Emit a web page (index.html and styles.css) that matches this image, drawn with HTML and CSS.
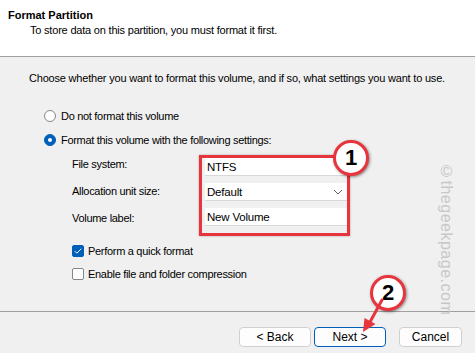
FILE: index.html
```html
<!DOCTYPE html>
<html lang="en">
<head>
    <meta charset="UTF-8">
    <title>Format Partition</title>
    <link rel="stylesheet" href="styles.css">
</head>
<body>
    <div id="wizard">
        <div class="header">
            <h1 class="title">Format Partition</h1>
            <p class="subtitle">To store data on this partition, you must format it first.</p>
        </div>

        <div class="content">
            <p class="intro">Choose whether you want to format this volume, and if so, what settings you want to use.</p>

            <div class="option">
                <span class="radio"></span>
                <span>Do not format this volume</span>
            </div>
            <div class="option">
                <span class="radio checked"></span>
                <span>Format this volume with the following settings:</span>
            </div>

            <div class="settings">
                <div class="labels">
                    <div class="label">File system:</div>
                    <div class="label">Allocation unit size:</div>
                    <div class="label">Volume label:</div>
                </div>
                <div class="fields">
                    <div class="field">NTFS</div>
                    <div class="field combo">
                        <span>Default</span>
                        <svg width="10" height="6" viewBox="0 0 10 6"><path d="M1 1l4 4 4-4" fill="none" stroke="#606060" stroke-width="1"/></svg>
                    </div>
                    <div class="field">New Volume</div>
                </div>
            </div>

            <div class="check-row">
                <span class="checkbox checked">
                    <svg width="8" height="6" viewBox="0 0 8 6"><path d="M0.8 3.2l2 2 4.4-4.4" fill="none" stroke="#fff" stroke-width="1"/></svg>
                </span>
                <span>Perform a quick format</span>
            </div>
            <div class="check-row">
                <span class="checkbox"></span>
                <span>Enable file and folder compression</span>
            </div>
        </div>

        <div class="footer">
            <button class="btn">&lt; Back</button>
            <button class="btn primary">Next &gt;</button>
            <button class="btn cancel">Cancel</button>
        </div>

        <!-- annotations -->
        <div class="badge badge-1">1</div>
        <div class="badge badge-2">2</div>
        <svg class="arrow" width="30" height="36" viewBox="0 0 30 36">
            <path d="M22 2 L10 24" stroke="#e8353d" stroke-width="3" stroke-linecap="round"/>
            <path d="M3 34 L4.5 20 L15.5 26 Z" fill="#e8353d"/>
        </svg>
        <div class="watermark">©thegeekpage.com</div>
    </div>
</body>
</html>
```

FILE: styles.css
```css
body {
    margin: 0;
    font-family: "Liberation Sans", Arial, sans-serif;
    color: #000;
}
#wizard {
    position: relative;
    width: 475px;
    height: 353px;
    background-color: #f0f0f0;
    overflow: hidden;
}

/* Header */
.header {
    height: 57px;
    background-color: #fff;
    border-bottom: 1px solid #a0a0a0;
    padding: 9px 0 0 8px;
    box-sizing: border-box;
}
.title {
    margin: 0;
    font-size: 11px;
    font-weight: bold;
    line-height: 13px;
}
.subtitle {
    margin: 2px 0 0 22px;
    font-size: 11px;
    line-height: 13px;
    letter-spacing: -0.2px;
}

/* Content */
.content {
    padding: 14px 0 0 29px;
    font-size: 11px;
    letter-spacing: -0.3px;
    height: 254px;
    box-sizing: border-box;
}
.intro {
    margin: 0 0 24px 0;
    line-height: 14px;
    white-space: nowrap;
    letter-spacing: -0.2px;
}
.option {
    display: flex;
    align-items: center;
    gap: 5px;
    margin-left: 15px;
    height: 14px;
    margin-bottom: 10px;
}
.radio {
    width: 10px;
    height: 10px;
    border: 1px solid #868686;
    border-radius: 50%;
    background-color: #fff;
    box-sizing: content-box;
}
.radio.checked {
    background-color: #005fb8;
    border-color: #005fb8;
    position: relative;
}
.radio.checked::after {
    content: "";
    position: absolute;
    left: 3px;
    top: 3px;
    width: 4px;
    height: 4px;
    border-radius: 50%;
    background-color: #fff;
}

.settings {
    display: flex;
    margin-left: 43px;
    margin-top: -2px;
}
.labels {
    width: 127px;
}
.label {
    height: 27px;
    line-height: 18px;
}
.fields {
    width: 142px;
    border: 3px solid #e8353d;
    padding: 0 0 0 3px;
    display: flex;
    flex-direction: column;
    gap: 7px;
    box-shadow: 0 0 2px rgba(0, 0, 0, 0.3);
}
.field {
    height: 17px;
    line-height: 18px;
    background-color: #fff;
    border-bottom: 1px solid #d8d8d8;
    padding-left: 2px;
    font-size: 11.5px;
    letter-spacing: -0.2px;
}
.field.combo {
    display: flex;
    align-items: center;
    justify-content: space-between;
    padding-right: 4px;
}

.check-row {
    display: flex;
    align-items: center;
    gap: 4px;
    margin-left: 43px;
    height: 14px;
}
.check-row + .check-row {
    margin-top: 9px;
}
.settings + .check-row {
    margin-top: 8px;
}
.checkbox {
    width: 10px;
    height: 10px;
    border: 1px solid #868686;
    border-radius: 2px;
    background-color: #fff;
    display: flex;
    align-items: center;
    justify-content: center;
}
.checkbox.checked {
    background-color: #005fb8;
    border-color: #005fb8;
}

/* Footer */
.footer {
    border-top: 1px solid #a0a0a0;
    height: 42px;
    box-sizing: border-box;
    display: flex;
    justify-content: flex-end;
    align-items: flex-start;
    padding: 15px 13px 0 0;
}
.btn {
    height: 20px;
    width: 72px;
    padding: 0;
    margin-left: 3px;
    background-color: #fdfdfd;
    border: 1px solid #d0d0d0;
    border-radius: 4px;
    font-family: "Liberation Sans", Arial, sans-serif;
    font-size: 12px;
    color: #000;
}
.btn.primary {
    border-color: #005fb8;
}
.btn.cancel {
    width: 63px;
    margin-left: 13px;
}

/* Annotations */
.badge {
    position: absolute;
    width: 30px;
    height: 30px;
    border: 3px solid #e8353d;
    border-radius: 50%;
    background-color: #fff;
    font-size: 22px;
    font-weight: bold;
    line-height: 30px;
    text-align: center;
    box-shadow: 1px 1px 3px rgba(0, 0, 0, 0.45);
}
.badge-1 {
    left: 333px;
    top: 140px;
}
.badge-2 {
    left: 370px;
    top: 275px;
}
.arrow {
    position: absolute;
    left: 360px;
    top: 298px;
}
.watermark {
    position: absolute;
    left: 437px;
    top: 163px;
    writing-mode: vertical-rl;
    font-size: 16px;
    color: #c8c8c8;
    letter-spacing: 0.5px;
}
```
